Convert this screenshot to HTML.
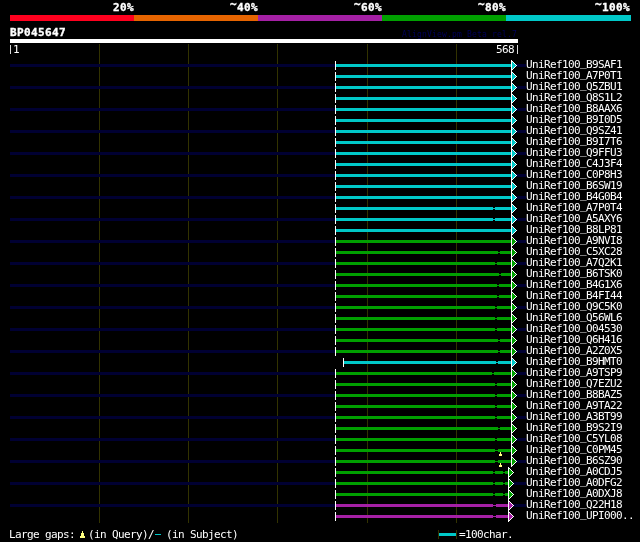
<!DOCTYPE html>
<html lang="en"><head><meta charset="utf-8"><title>AlignView BP045647</title>
<style>
html,body{margin:0;padding:0;background:#000;}
body{width:640px;height:542px;overflow:hidden;position:relative;}
.g{position:absolute;left:0;top:0;display:block;}
.t{position:absolute;white-space:pre;color:#fff;line-height:1;margin:0;padding:0;transform-origin:0 0;}

.u{position:relative;top:-2px;}

.w{position:relative;top:-3px;}

.t.p{font-size:9.3px;letter-spacing:0;-webkit-text-stroke:0.1px #fff;}
#tx{position:absolute;left:0;top:0;width:640px;height:542px;will-change:transform;}
.b{font-family:'DejaVu Sans Mono','Liberation Mono',monospace;font-weight:bold;font-size:11px;letter-spacing:0.38px;-webkit-text-stroke:0.35px #fff;}
.s{font-family:'DejaVu Sans Mono','Liberation Mono',monospace;font-size:11px;letter-spacing:-0.62px;}
.n{font-family:'DejaVu Sans Mono','Liberation Mono',monospace;font-size:8px;letter-spacing:0.18px;color:#00005a;}
</style></head>
<body>
<svg class="g" width="640" height="542" viewBox="0 0 640 542" shape-rendering="crispEdges">
<rect x="10" y="15" width="124" height="6" fill="#ff001e"/>
<rect x="134" y="15" width="124" height="6" fill="#e66400"/>
<rect x="258" y="15" width="124" height="6" fill="#a520a5"/>
<rect x="382" y="15" width="124" height="6" fill="#00a000"/>
<rect x="506" y="15" width="125" height="6" fill="#00c8c8"/>
<rect x="10" y="39" width="508" height="4" fill="#ffffff"/>
<rect x="99" y="44" width="1" height="479" fill="#323200"/>
<rect x="188" y="44" width="1" height="479" fill="#323200"/>
<rect x="277" y="44" width="1" height="479" fill="#323200"/>
<rect x="367" y="44" width="1" height="479" fill="#323200"/>
<rect x="456" y="44" width="1" height="479" fill="#323200"/>
<rect x="10" y="64" width="516" height="3" fill="#000032"/>
<rect x="336" y="64" width="175" height="3" fill="#000000"/>
<rect x="336" y="65" width="175" height="1" fill="#00c8c8"/>
<rect x="336" y="64" width="175" height="3" fill="#00c8c8"/>
<rect x="335" y="61" width="1" height="9" fill="#ffffff"/>
<rect x="511" y="60" width="1" height="11" fill="#ffffff"/>
<rect x="512" y="62" width="1" height="7" fill="#00c8c8"/>
<rect x="512" y="61" width="1" height="1" fill="#ffffff"/>
<rect x="512" y="69" width="1" height="1" fill="#ffffff"/>
<rect x="513" y="63" width="1" height="5" fill="#00c8c8"/>
<rect x="513" y="62" width="1" height="1" fill="#ffffff"/>
<rect x="513" y="68" width="1" height="1" fill="#ffffff"/>
<rect x="514" y="64" width="1" height="3" fill="#00c8c8"/>
<rect x="514" y="63" width="1" height="1" fill="#ffffff"/>
<rect x="514" y="67" width="1" height="1" fill="#ffffff"/>
<rect x="515" y="65" width="1" height="1" fill="#00c8c8"/>
<rect x="515" y="64" width="1" height="1" fill="#ffffff"/>
<rect x="515" y="66" width="1" height="1" fill="#ffffff"/>
<rect x="516" y="65" width="1" height="1" fill="#ffffff"/>
<rect x="336" y="75" width="175" height="3" fill="#000000"/>
<rect x="336" y="76" width="175" height="1" fill="#00c8c8"/>
<rect x="336" y="75" width="175" height="3" fill="#00c8c8"/>
<rect x="335" y="72" width="1" height="9" fill="#ffffff"/>
<rect x="511" y="71" width="1" height="11" fill="#ffffff"/>
<rect x="512" y="73" width="1" height="7" fill="#00c8c8"/>
<rect x="512" y="72" width="1" height="1" fill="#ffffff"/>
<rect x="512" y="80" width="1" height="1" fill="#ffffff"/>
<rect x="513" y="74" width="1" height="5" fill="#00c8c8"/>
<rect x="513" y="73" width="1" height="1" fill="#ffffff"/>
<rect x="513" y="79" width="1" height="1" fill="#ffffff"/>
<rect x="514" y="75" width="1" height="3" fill="#00c8c8"/>
<rect x="514" y="74" width="1" height="1" fill="#ffffff"/>
<rect x="514" y="78" width="1" height="1" fill="#ffffff"/>
<rect x="515" y="76" width="1" height="1" fill="#00c8c8"/>
<rect x="515" y="75" width="1" height="1" fill="#ffffff"/>
<rect x="515" y="77" width="1" height="1" fill="#ffffff"/>
<rect x="516" y="76" width="1" height="1" fill="#ffffff"/>
<rect x="10" y="86" width="516" height="3" fill="#000032"/>
<rect x="336" y="86" width="175" height="3" fill="#000000"/>
<rect x="336" y="87" width="175" height="1" fill="#00c8c8"/>
<rect x="336" y="86" width="175" height="3" fill="#00c8c8"/>
<rect x="335" y="83" width="1" height="9" fill="#ffffff"/>
<rect x="511" y="82" width="1" height="11" fill="#ffffff"/>
<rect x="512" y="84" width="1" height="7" fill="#00c8c8"/>
<rect x="512" y="83" width="1" height="1" fill="#ffffff"/>
<rect x="512" y="91" width="1" height="1" fill="#ffffff"/>
<rect x="513" y="85" width="1" height="5" fill="#00c8c8"/>
<rect x="513" y="84" width="1" height="1" fill="#ffffff"/>
<rect x="513" y="90" width="1" height="1" fill="#ffffff"/>
<rect x="514" y="86" width="1" height="3" fill="#00c8c8"/>
<rect x="514" y="85" width="1" height="1" fill="#ffffff"/>
<rect x="514" y="89" width="1" height="1" fill="#ffffff"/>
<rect x="515" y="87" width="1" height="1" fill="#00c8c8"/>
<rect x="515" y="86" width="1" height="1" fill="#ffffff"/>
<rect x="515" y="88" width="1" height="1" fill="#ffffff"/>
<rect x="516" y="87" width="1" height="1" fill="#ffffff"/>
<rect x="336" y="97" width="175" height="3" fill="#000000"/>
<rect x="336" y="98" width="175" height="1" fill="#00c8c8"/>
<rect x="336" y="97" width="175" height="3" fill="#00c8c8"/>
<rect x="335" y="94" width="1" height="9" fill="#ffffff"/>
<rect x="511" y="93" width="1" height="11" fill="#ffffff"/>
<rect x="512" y="95" width="1" height="7" fill="#00c8c8"/>
<rect x="512" y="94" width="1" height="1" fill="#ffffff"/>
<rect x="512" y="102" width="1" height="1" fill="#ffffff"/>
<rect x="513" y="96" width="1" height="5" fill="#00c8c8"/>
<rect x="513" y="95" width="1" height="1" fill="#ffffff"/>
<rect x="513" y="101" width="1" height="1" fill="#ffffff"/>
<rect x="514" y="97" width="1" height="3" fill="#00c8c8"/>
<rect x="514" y="96" width="1" height="1" fill="#ffffff"/>
<rect x="514" y="100" width="1" height="1" fill="#ffffff"/>
<rect x="515" y="98" width="1" height="1" fill="#00c8c8"/>
<rect x="515" y="97" width="1" height="1" fill="#ffffff"/>
<rect x="515" y="99" width="1" height="1" fill="#ffffff"/>
<rect x="516" y="98" width="1" height="1" fill="#ffffff"/>
<rect x="10" y="108" width="516" height="3" fill="#000032"/>
<rect x="336" y="108" width="175" height="3" fill="#000000"/>
<rect x="336" y="109" width="175" height="1" fill="#00c8c8"/>
<rect x="336" y="108" width="175" height="3" fill="#00c8c8"/>
<rect x="335" y="105" width="1" height="9" fill="#ffffff"/>
<rect x="511" y="104" width="1" height="11" fill="#ffffff"/>
<rect x="512" y="106" width="1" height="7" fill="#00c8c8"/>
<rect x="512" y="105" width="1" height="1" fill="#ffffff"/>
<rect x="512" y="113" width="1" height="1" fill="#ffffff"/>
<rect x="513" y="107" width="1" height="5" fill="#00c8c8"/>
<rect x="513" y="106" width="1" height="1" fill="#ffffff"/>
<rect x="513" y="112" width="1" height="1" fill="#ffffff"/>
<rect x="514" y="108" width="1" height="3" fill="#00c8c8"/>
<rect x="514" y="107" width="1" height="1" fill="#ffffff"/>
<rect x="514" y="111" width="1" height="1" fill="#ffffff"/>
<rect x="515" y="109" width="1" height="1" fill="#00c8c8"/>
<rect x="515" y="108" width="1" height="1" fill="#ffffff"/>
<rect x="515" y="110" width="1" height="1" fill="#ffffff"/>
<rect x="516" y="109" width="1" height="1" fill="#ffffff"/>
<rect x="336" y="119" width="175" height="3" fill="#000000"/>
<rect x="336" y="120" width="175" height="1" fill="#00c8c8"/>
<rect x="336" y="119" width="175" height="3" fill="#00c8c8"/>
<rect x="335" y="116" width="1" height="9" fill="#ffffff"/>
<rect x="511" y="115" width="1" height="11" fill="#ffffff"/>
<rect x="512" y="117" width="1" height="7" fill="#00c8c8"/>
<rect x="512" y="116" width="1" height="1" fill="#ffffff"/>
<rect x="512" y="124" width="1" height="1" fill="#ffffff"/>
<rect x="513" y="118" width="1" height="5" fill="#00c8c8"/>
<rect x="513" y="117" width="1" height="1" fill="#ffffff"/>
<rect x="513" y="123" width="1" height="1" fill="#ffffff"/>
<rect x="514" y="119" width="1" height="3" fill="#00c8c8"/>
<rect x="514" y="118" width="1" height="1" fill="#ffffff"/>
<rect x="514" y="122" width="1" height="1" fill="#ffffff"/>
<rect x="515" y="120" width="1" height="1" fill="#00c8c8"/>
<rect x="515" y="119" width="1" height="1" fill="#ffffff"/>
<rect x="515" y="121" width="1" height="1" fill="#ffffff"/>
<rect x="516" y="120" width="1" height="1" fill="#ffffff"/>
<rect x="10" y="130" width="516" height="3" fill="#000032"/>
<rect x="336" y="130" width="175" height="3" fill="#000000"/>
<rect x="336" y="131" width="175" height="1" fill="#00c8c8"/>
<rect x="336" y="130" width="175" height="3" fill="#00c8c8"/>
<rect x="335" y="127" width="1" height="9" fill="#ffffff"/>
<rect x="511" y="126" width="1" height="11" fill="#ffffff"/>
<rect x="512" y="128" width="1" height="7" fill="#00c8c8"/>
<rect x="512" y="127" width="1" height="1" fill="#ffffff"/>
<rect x="512" y="135" width="1" height="1" fill="#ffffff"/>
<rect x="513" y="129" width="1" height="5" fill="#00c8c8"/>
<rect x="513" y="128" width="1" height="1" fill="#ffffff"/>
<rect x="513" y="134" width="1" height="1" fill="#ffffff"/>
<rect x="514" y="130" width="1" height="3" fill="#00c8c8"/>
<rect x="514" y="129" width="1" height="1" fill="#ffffff"/>
<rect x="514" y="133" width="1" height="1" fill="#ffffff"/>
<rect x="515" y="131" width="1" height="1" fill="#00c8c8"/>
<rect x="515" y="130" width="1" height="1" fill="#ffffff"/>
<rect x="515" y="132" width="1" height="1" fill="#ffffff"/>
<rect x="516" y="131" width="1" height="1" fill="#ffffff"/>
<rect x="336" y="141" width="175" height="3" fill="#000000"/>
<rect x="336" y="142" width="175" height="1" fill="#00c8c8"/>
<rect x="336" y="141" width="175" height="3" fill="#00c8c8"/>
<rect x="335" y="138" width="1" height="9" fill="#ffffff"/>
<rect x="511" y="137" width="1" height="11" fill="#ffffff"/>
<rect x="512" y="139" width="1" height="7" fill="#00c8c8"/>
<rect x="512" y="138" width="1" height="1" fill="#ffffff"/>
<rect x="512" y="146" width="1" height="1" fill="#ffffff"/>
<rect x="513" y="140" width="1" height="5" fill="#00c8c8"/>
<rect x="513" y="139" width="1" height="1" fill="#ffffff"/>
<rect x="513" y="145" width="1" height="1" fill="#ffffff"/>
<rect x="514" y="141" width="1" height="3" fill="#00c8c8"/>
<rect x="514" y="140" width="1" height="1" fill="#ffffff"/>
<rect x="514" y="144" width="1" height="1" fill="#ffffff"/>
<rect x="515" y="142" width="1" height="1" fill="#00c8c8"/>
<rect x="515" y="141" width="1" height="1" fill="#ffffff"/>
<rect x="515" y="143" width="1" height="1" fill="#ffffff"/>
<rect x="516" y="142" width="1" height="1" fill="#ffffff"/>
<rect x="10" y="152" width="516" height="3" fill="#000032"/>
<rect x="336" y="152" width="175" height="3" fill="#000000"/>
<rect x="336" y="153" width="175" height="1" fill="#00c8c8"/>
<rect x="336" y="152" width="175" height="3" fill="#00c8c8"/>
<rect x="335" y="149" width="1" height="9" fill="#ffffff"/>
<rect x="511" y="148" width="1" height="11" fill="#ffffff"/>
<rect x="512" y="150" width="1" height="7" fill="#00c8c8"/>
<rect x="512" y="149" width="1" height="1" fill="#ffffff"/>
<rect x="512" y="157" width="1" height="1" fill="#ffffff"/>
<rect x="513" y="151" width="1" height="5" fill="#00c8c8"/>
<rect x="513" y="150" width="1" height="1" fill="#ffffff"/>
<rect x="513" y="156" width="1" height="1" fill="#ffffff"/>
<rect x="514" y="152" width="1" height="3" fill="#00c8c8"/>
<rect x="514" y="151" width="1" height="1" fill="#ffffff"/>
<rect x="514" y="155" width="1" height="1" fill="#ffffff"/>
<rect x="515" y="153" width="1" height="1" fill="#00c8c8"/>
<rect x="515" y="152" width="1" height="1" fill="#ffffff"/>
<rect x="515" y="154" width="1" height="1" fill="#ffffff"/>
<rect x="516" y="153" width="1" height="1" fill="#ffffff"/>
<rect x="336" y="163" width="175" height="3" fill="#000000"/>
<rect x="336" y="164" width="175" height="1" fill="#00c8c8"/>
<rect x="336" y="163" width="175" height="3" fill="#00c8c8"/>
<rect x="335" y="160" width="1" height="9" fill="#ffffff"/>
<rect x="511" y="159" width="1" height="11" fill="#ffffff"/>
<rect x="512" y="161" width="1" height="7" fill="#00c8c8"/>
<rect x="512" y="160" width="1" height="1" fill="#ffffff"/>
<rect x="512" y="168" width="1" height="1" fill="#ffffff"/>
<rect x="513" y="162" width="1" height="5" fill="#00c8c8"/>
<rect x="513" y="161" width="1" height="1" fill="#ffffff"/>
<rect x="513" y="167" width="1" height="1" fill="#ffffff"/>
<rect x="514" y="163" width="1" height="3" fill="#00c8c8"/>
<rect x="514" y="162" width="1" height="1" fill="#ffffff"/>
<rect x="514" y="166" width="1" height="1" fill="#ffffff"/>
<rect x="515" y="164" width="1" height="1" fill="#00c8c8"/>
<rect x="515" y="163" width="1" height="1" fill="#ffffff"/>
<rect x="515" y="165" width="1" height="1" fill="#ffffff"/>
<rect x="516" y="164" width="1" height="1" fill="#ffffff"/>
<rect x="10" y="174" width="516" height="3" fill="#000032"/>
<rect x="336" y="174" width="175" height="3" fill="#000000"/>
<rect x="336" y="175" width="175" height="1" fill="#00c8c8"/>
<rect x="336" y="174" width="175" height="3" fill="#00c8c8"/>
<rect x="335" y="171" width="1" height="9" fill="#ffffff"/>
<rect x="511" y="170" width="1" height="11" fill="#ffffff"/>
<rect x="512" y="172" width="1" height="7" fill="#00c8c8"/>
<rect x="512" y="171" width="1" height="1" fill="#ffffff"/>
<rect x="512" y="179" width="1" height="1" fill="#ffffff"/>
<rect x="513" y="173" width="1" height="5" fill="#00c8c8"/>
<rect x="513" y="172" width="1" height="1" fill="#ffffff"/>
<rect x="513" y="178" width="1" height="1" fill="#ffffff"/>
<rect x="514" y="174" width="1" height="3" fill="#00c8c8"/>
<rect x="514" y="173" width="1" height="1" fill="#ffffff"/>
<rect x="514" y="177" width="1" height="1" fill="#ffffff"/>
<rect x="515" y="175" width="1" height="1" fill="#00c8c8"/>
<rect x="515" y="174" width="1" height="1" fill="#ffffff"/>
<rect x="515" y="176" width="1" height="1" fill="#ffffff"/>
<rect x="516" y="175" width="1" height="1" fill="#ffffff"/>
<rect x="336" y="185" width="175" height="3" fill="#000000"/>
<rect x="336" y="186" width="175" height="1" fill="#00c8c8"/>
<rect x="336" y="185" width="175" height="3" fill="#00c8c8"/>
<rect x="335" y="182" width="1" height="9" fill="#ffffff"/>
<rect x="511" y="181" width="1" height="11" fill="#ffffff"/>
<rect x="512" y="183" width="1" height="7" fill="#00c8c8"/>
<rect x="512" y="182" width="1" height="1" fill="#ffffff"/>
<rect x="512" y="190" width="1" height="1" fill="#ffffff"/>
<rect x="513" y="184" width="1" height="5" fill="#00c8c8"/>
<rect x="513" y="183" width="1" height="1" fill="#ffffff"/>
<rect x="513" y="189" width="1" height="1" fill="#ffffff"/>
<rect x="514" y="185" width="1" height="3" fill="#00c8c8"/>
<rect x="514" y="184" width="1" height="1" fill="#ffffff"/>
<rect x="514" y="188" width="1" height="1" fill="#ffffff"/>
<rect x="515" y="186" width="1" height="1" fill="#00c8c8"/>
<rect x="515" y="185" width="1" height="1" fill="#ffffff"/>
<rect x="515" y="187" width="1" height="1" fill="#ffffff"/>
<rect x="516" y="186" width="1" height="1" fill="#ffffff"/>
<rect x="10" y="196" width="516" height="3" fill="#000032"/>
<rect x="336" y="196" width="175" height="3" fill="#000000"/>
<rect x="336" y="197" width="175" height="1" fill="#00c8c8"/>
<rect x="336" y="196" width="175" height="3" fill="#00c8c8"/>
<rect x="335" y="193" width="1" height="9" fill="#ffffff"/>
<rect x="511" y="192" width="1" height="11" fill="#ffffff"/>
<rect x="512" y="194" width="1" height="7" fill="#00c8c8"/>
<rect x="512" y="193" width="1" height="1" fill="#ffffff"/>
<rect x="512" y="201" width="1" height="1" fill="#ffffff"/>
<rect x="513" y="195" width="1" height="5" fill="#00c8c8"/>
<rect x="513" y="194" width="1" height="1" fill="#ffffff"/>
<rect x="513" y="200" width="1" height="1" fill="#ffffff"/>
<rect x="514" y="196" width="1" height="3" fill="#00c8c8"/>
<rect x="514" y="195" width="1" height="1" fill="#ffffff"/>
<rect x="514" y="199" width="1" height="1" fill="#ffffff"/>
<rect x="515" y="197" width="1" height="1" fill="#00c8c8"/>
<rect x="515" y="196" width="1" height="1" fill="#ffffff"/>
<rect x="515" y="198" width="1" height="1" fill="#ffffff"/>
<rect x="516" y="197" width="1" height="1" fill="#ffffff"/>
<rect x="336" y="207" width="175" height="3" fill="#000000"/>
<rect x="336" y="208" width="175" height="1" fill="#00c8c8"/>
<rect x="336" y="207" width="157" height="3" fill="#00c8c8"/>
<rect x="495" y="207" width="16" height="3" fill="#00c8c8"/>
<rect x="335" y="204" width="1" height="9" fill="#ffffff"/>
<rect x="511" y="203" width="1" height="11" fill="#ffffff"/>
<rect x="512" y="205" width="1" height="7" fill="#00c8c8"/>
<rect x="512" y="204" width="1" height="1" fill="#ffffff"/>
<rect x="512" y="212" width="1" height="1" fill="#ffffff"/>
<rect x="513" y="206" width="1" height="5" fill="#00c8c8"/>
<rect x="513" y="205" width="1" height="1" fill="#ffffff"/>
<rect x="513" y="211" width="1" height="1" fill="#ffffff"/>
<rect x="514" y="207" width="1" height="3" fill="#00c8c8"/>
<rect x="514" y="206" width="1" height="1" fill="#ffffff"/>
<rect x="514" y="210" width="1" height="1" fill="#ffffff"/>
<rect x="515" y="208" width="1" height="1" fill="#00c8c8"/>
<rect x="515" y="207" width="1" height="1" fill="#ffffff"/>
<rect x="515" y="209" width="1" height="1" fill="#ffffff"/>
<rect x="516" y="208" width="1" height="1" fill="#ffffff"/>
<rect x="10" y="218" width="516" height="3" fill="#000032"/>
<rect x="336" y="218" width="175" height="3" fill="#000000"/>
<rect x="336" y="219" width="175" height="1" fill="#00c8c8"/>
<rect x="336" y="218" width="157" height="3" fill="#00c8c8"/>
<rect x="495" y="218" width="16" height="3" fill="#00c8c8"/>
<rect x="335" y="215" width="1" height="9" fill="#ffffff"/>
<rect x="511" y="214" width="1" height="11" fill="#ffffff"/>
<rect x="512" y="216" width="1" height="7" fill="#00c8c8"/>
<rect x="512" y="215" width="1" height="1" fill="#ffffff"/>
<rect x="512" y="223" width="1" height="1" fill="#ffffff"/>
<rect x="513" y="217" width="1" height="5" fill="#00c8c8"/>
<rect x="513" y="216" width="1" height="1" fill="#ffffff"/>
<rect x="513" y="222" width="1" height="1" fill="#ffffff"/>
<rect x="514" y="218" width="1" height="3" fill="#00c8c8"/>
<rect x="514" y="217" width="1" height="1" fill="#ffffff"/>
<rect x="514" y="221" width="1" height="1" fill="#ffffff"/>
<rect x="515" y="219" width="1" height="1" fill="#00c8c8"/>
<rect x="515" y="218" width="1" height="1" fill="#ffffff"/>
<rect x="515" y="220" width="1" height="1" fill="#ffffff"/>
<rect x="516" y="219" width="1" height="1" fill="#ffffff"/>
<rect x="336" y="229" width="175" height="3" fill="#000000"/>
<rect x="336" y="230" width="175" height="1" fill="#00c8c8"/>
<rect x="336" y="229" width="175" height="3" fill="#00c8c8"/>
<rect x="335" y="226" width="1" height="9" fill="#ffffff"/>
<rect x="511" y="225" width="1" height="11" fill="#ffffff"/>
<rect x="512" y="227" width="1" height="7" fill="#00c8c8"/>
<rect x="512" y="226" width="1" height="1" fill="#ffffff"/>
<rect x="512" y="234" width="1" height="1" fill="#ffffff"/>
<rect x="513" y="228" width="1" height="5" fill="#00c8c8"/>
<rect x="513" y="227" width="1" height="1" fill="#ffffff"/>
<rect x="513" y="233" width="1" height="1" fill="#ffffff"/>
<rect x="514" y="229" width="1" height="3" fill="#00c8c8"/>
<rect x="514" y="228" width="1" height="1" fill="#ffffff"/>
<rect x="514" y="232" width="1" height="1" fill="#ffffff"/>
<rect x="515" y="230" width="1" height="1" fill="#00c8c8"/>
<rect x="515" y="229" width="1" height="1" fill="#ffffff"/>
<rect x="515" y="231" width="1" height="1" fill="#ffffff"/>
<rect x="516" y="230" width="1" height="1" fill="#ffffff"/>
<rect x="10" y="240" width="516" height="3" fill="#000032"/>
<rect x="336" y="240" width="175" height="3" fill="#000000"/>
<rect x="336" y="241" width="175" height="1" fill="#00a000"/>
<rect x="336" y="240" width="175" height="3" fill="#00a000"/>
<rect x="335" y="237" width="1" height="9" fill="#ffffff"/>
<rect x="511" y="236" width="1" height="11" fill="#ffffff"/>
<rect x="512" y="238" width="1" height="7" fill="#00a000"/>
<rect x="512" y="237" width="1" height="1" fill="#ffffff"/>
<rect x="512" y="245" width="1" height="1" fill="#ffffff"/>
<rect x="513" y="239" width="1" height="5" fill="#00a000"/>
<rect x="513" y="238" width="1" height="1" fill="#ffffff"/>
<rect x="513" y="244" width="1" height="1" fill="#ffffff"/>
<rect x="514" y="240" width="1" height="3" fill="#00a000"/>
<rect x="514" y="239" width="1" height="1" fill="#ffffff"/>
<rect x="514" y="243" width="1" height="1" fill="#ffffff"/>
<rect x="515" y="241" width="1" height="1" fill="#00a000"/>
<rect x="515" y="240" width="1" height="1" fill="#ffffff"/>
<rect x="515" y="242" width="1" height="1" fill="#ffffff"/>
<rect x="516" y="241" width="1" height="1" fill="#ffffff"/>
<rect x="336" y="251" width="175" height="3" fill="#000000"/>
<rect x="336" y="252" width="175" height="1" fill="#00a000"/>
<rect x="336" y="251" width="162" height="3" fill="#00a000"/>
<rect x="500" y="251" width="11" height="3" fill="#00a000"/>
<rect x="335" y="248" width="1" height="9" fill="#ffffff"/>
<rect x="511" y="247" width="1" height="11" fill="#ffffff"/>
<rect x="512" y="249" width="1" height="7" fill="#00a000"/>
<rect x="512" y="248" width="1" height="1" fill="#ffffff"/>
<rect x="512" y="256" width="1" height="1" fill="#ffffff"/>
<rect x="513" y="250" width="1" height="5" fill="#00a000"/>
<rect x="513" y="249" width="1" height="1" fill="#ffffff"/>
<rect x="513" y="255" width="1" height="1" fill="#ffffff"/>
<rect x="514" y="251" width="1" height="3" fill="#00a000"/>
<rect x="514" y="250" width="1" height="1" fill="#ffffff"/>
<rect x="514" y="254" width="1" height="1" fill="#ffffff"/>
<rect x="515" y="252" width="1" height="1" fill="#00a000"/>
<rect x="515" y="251" width="1" height="1" fill="#ffffff"/>
<rect x="515" y="253" width="1" height="1" fill="#ffffff"/>
<rect x="516" y="252" width="1" height="1" fill="#ffffff"/>
<rect x="10" y="262" width="516" height="3" fill="#000032"/>
<rect x="336" y="262" width="175" height="3" fill="#000000"/>
<rect x="336" y="263" width="175" height="1" fill="#00a000"/>
<rect x="336" y="262" width="159" height="3" fill="#00a000"/>
<rect x="497" y="262" width="14" height="3" fill="#00a000"/>
<rect x="335" y="259" width="1" height="9" fill="#ffffff"/>
<rect x="511" y="258" width="1" height="11" fill="#ffffff"/>
<rect x="512" y="260" width="1" height="7" fill="#00a000"/>
<rect x="512" y="259" width="1" height="1" fill="#ffffff"/>
<rect x="512" y="267" width="1" height="1" fill="#ffffff"/>
<rect x="513" y="261" width="1" height="5" fill="#00a000"/>
<rect x="513" y="260" width="1" height="1" fill="#ffffff"/>
<rect x="513" y="266" width="1" height="1" fill="#ffffff"/>
<rect x="514" y="262" width="1" height="3" fill="#00a000"/>
<rect x="514" y="261" width="1" height="1" fill="#ffffff"/>
<rect x="514" y="265" width="1" height="1" fill="#ffffff"/>
<rect x="515" y="263" width="1" height="1" fill="#00a000"/>
<rect x="515" y="262" width="1" height="1" fill="#ffffff"/>
<rect x="515" y="264" width="1" height="1" fill="#ffffff"/>
<rect x="516" y="263" width="1" height="1" fill="#ffffff"/>
<rect x="336" y="273" width="175" height="3" fill="#000000"/>
<rect x="336" y="274" width="175" height="1" fill="#00a000"/>
<rect x="336" y="273" width="163" height="3" fill="#00a000"/>
<rect x="501" y="273" width="10" height="3" fill="#00a000"/>
<rect x="335" y="270" width="1" height="9" fill="#ffffff"/>
<rect x="511" y="269" width="1" height="11" fill="#ffffff"/>
<rect x="512" y="271" width="1" height="7" fill="#00a000"/>
<rect x="512" y="270" width="1" height="1" fill="#ffffff"/>
<rect x="512" y="278" width="1" height="1" fill="#ffffff"/>
<rect x="513" y="272" width="1" height="5" fill="#00a000"/>
<rect x="513" y="271" width="1" height="1" fill="#ffffff"/>
<rect x="513" y="277" width="1" height="1" fill="#ffffff"/>
<rect x="514" y="273" width="1" height="3" fill="#00a000"/>
<rect x="514" y="272" width="1" height="1" fill="#ffffff"/>
<rect x="514" y="276" width="1" height="1" fill="#ffffff"/>
<rect x="515" y="274" width="1" height="1" fill="#00a000"/>
<rect x="515" y="273" width="1" height="1" fill="#ffffff"/>
<rect x="515" y="275" width="1" height="1" fill="#ffffff"/>
<rect x="516" y="274" width="1" height="1" fill="#ffffff"/>
<rect x="10" y="284" width="516" height="3" fill="#000032"/>
<rect x="336" y="284" width="175" height="3" fill="#000000"/>
<rect x="336" y="285" width="175" height="1" fill="#00a000"/>
<rect x="336" y="284" width="161" height="3" fill="#00a000"/>
<rect x="499" y="284" width="12" height="3" fill="#00a000"/>
<rect x="335" y="281" width="1" height="9" fill="#ffffff"/>
<rect x="511" y="280" width="1" height="11" fill="#ffffff"/>
<rect x="512" y="282" width="1" height="7" fill="#00a000"/>
<rect x="512" y="281" width="1" height="1" fill="#ffffff"/>
<rect x="512" y="289" width="1" height="1" fill="#ffffff"/>
<rect x="513" y="283" width="1" height="5" fill="#00a000"/>
<rect x="513" y="282" width="1" height="1" fill="#ffffff"/>
<rect x="513" y="288" width="1" height="1" fill="#ffffff"/>
<rect x="514" y="284" width="1" height="3" fill="#00a000"/>
<rect x="514" y="283" width="1" height="1" fill="#ffffff"/>
<rect x="514" y="287" width="1" height="1" fill="#ffffff"/>
<rect x="515" y="285" width="1" height="1" fill="#00a000"/>
<rect x="515" y="284" width="1" height="1" fill="#ffffff"/>
<rect x="515" y="286" width="1" height="1" fill="#ffffff"/>
<rect x="516" y="285" width="1" height="1" fill="#ffffff"/>
<rect x="336" y="295" width="175" height="3" fill="#000000"/>
<rect x="336" y="296" width="175" height="1" fill="#00a000"/>
<rect x="336" y="295" width="161" height="3" fill="#00a000"/>
<rect x="499" y="295" width="12" height="3" fill="#00a000"/>
<rect x="335" y="292" width="1" height="9" fill="#ffffff"/>
<rect x="511" y="291" width="1" height="11" fill="#ffffff"/>
<rect x="512" y="293" width="1" height="7" fill="#00a000"/>
<rect x="512" y="292" width="1" height="1" fill="#ffffff"/>
<rect x="512" y="300" width="1" height="1" fill="#ffffff"/>
<rect x="513" y="294" width="1" height="5" fill="#00a000"/>
<rect x="513" y="293" width="1" height="1" fill="#ffffff"/>
<rect x="513" y="299" width="1" height="1" fill="#ffffff"/>
<rect x="514" y="295" width="1" height="3" fill="#00a000"/>
<rect x="514" y="294" width="1" height="1" fill="#ffffff"/>
<rect x="514" y="298" width="1" height="1" fill="#ffffff"/>
<rect x="515" y="296" width="1" height="1" fill="#00a000"/>
<rect x="515" y="295" width="1" height="1" fill="#ffffff"/>
<rect x="515" y="297" width="1" height="1" fill="#ffffff"/>
<rect x="516" y="296" width="1" height="1" fill="#ffffff"/>
<rect x="10" y="306" width="516" height="3" fill="#000032"/>
<rect x="336" y="306" width="175" height="3" fill="#000000"/>
<rect x="336" y="307" width="175" height="1" fill="#00a000"/>
<rect x="336" y="306" width="159" height="3" fill="#00a000"/>
<rect x="497" y="306" width="14" height="3" fill="#00a000"/>
<rect x="335" y="303" width="1" height="9" fill="#ffffff"/>
<rect x="511" y="302" width="1" height="11" fill="#ffffff"/>
<rect x="512" y="304" width="1" height="7" fill="#00a000"/>
<rect x="512" y="303" width="1" height="1" fill="#ffffff"/>
<rect x="512" y="311" width="1" height="1" fill="#ffffff"/>
<rect x="513" y="305" width="1" height="5" fill="#00a000"/>
<rect x="513" y="304" width="1" height="1" fill="#ffffff"/>
<rect x="513" y="310" width="1" height="1" fill="#ffffff"/>
<rect x="514" y="306" width="1" height="3" fill="#00a000"/>
<rect x="514" y="305" width="1" height="1" fill="#ffffff"/>
<rect x="514" y="309" width="1" height="1" fill="#ffffff"/>
<rect x="515" y="307" width="1" height="1" fill="#00a000"/>
<rect x="515" y="306" width="1" height="1" fill="#ffffff"/>
<rect x="515" y="308" width="1" height="1" fill="#ffffff"/>
<rect x="516" y="307" width="1" height="1" fill="#ffffff"/>
<rect x="336" y="317" width="175" height="3" fill="#000000"/>
<rect x="336" y="318" width="175" height="1" fill="#00a000"/>
<rect x="336" y="317" width="159" height="3" fill="#00a000"/>
<rect x="497" y="317" width="14" height="3" fill="#00a000"/>
<rect x="335" y="314" width="1" height="9" fill="#ffffff"/>
<rect x="511" y="313" width="1" height="11" fill="#ffffff"/>
<rect x="512" y="315" width="1" height="7" fill="#00a000"/>
<rect x="512" y="314" width="1" height="1" fill="#ffffff"/>
<rect x="512" y="322" width="1" height="1" fill="#ffffff"/>
<rect x="513" y="316" width="1" height="5" fill="#00a000"/>
<rect x="513" y="315" width="1" height="1" fill="#ffffff"/>
<rect x="513" y="321" width="1" height="1" fill="#ffffff"/>
<rect x="514" y="317" width="1" height="3" fill="#00a000"/>
<rect x="514" y="316" width="1" height="1" fill="#ffffff"/>
<rect x="514" y="320" width="1" height="1" fill="#ffffff"/>
<rect x="515" y="318" width="1" height="1" fill="#00a000"/>
<rect x="515" y="317" width="1" height="1" fill="#ffffff"/>
<rect x="515" y="319" width="1" height="1" fill="#ffffff"/>
<rect x="516" y="318" width="1" height="1" fill="#ffffff"/>
<rect x="10" y="328" width="516" height="3" fill="#000032"/>
<rect x="336" y="328" width="175" height="3" fill="#000000"/>
<rect x="336" y="329" width="175" height="1" fill="#00a000"/>
<rect x="336" y="328" width="159" height="3" fill="#00a000"/>
<rect x="497" y="328" width="14" height="3" fill="#00a000"/>
<rect x="335" y="325" width="1" height="9" fill="#ffffff"/>
<rect x="511" y="324" width="1" height="11" fill="#ffffff"/>
<rect x="512" y="326" width="1" height="7" fill="#00a000"/>
<rect x="512" y="325" width="1" height="1" fill="#ffffff"/>
<rect x="512" y="333" width="1" height="1" fill="#ffffff"/>
<rect x="513" y="327" width="1" height="5" fill="#00a000"/>
<rect x="513" y="326" width="1" height="1" fill="#ffffff"/>
<rect x="513" y="332" width="1" height="1" fill="#ffffff"/>
<rect x="514" y="328" width="1" height="3" fill="#00a000"/>
<rect x="514" y="327" width="1" height="1" fill="#ffffff"/>
<rect x="514" y="331" width="1" height="1" fill="#ffffff"/>
<rect x="515" y="329" width="1" height="1" fill="#00a000"/>
<rect x="515" y="328" width="1" height="1" fill="#ffffff"/>
<rect x="515" y="330" width="1" height="1" fill="#ffffff"/>
<rect x="516" y="329" width="1" height="1" fill="#ffffff"/>
<rect x="336" y="339" width="175" height="3" fill="#000000"/>
<rect x="336" y="340" width="175" height="1" fill="#00a000"/>
<rect x="336" y="339" width="162" height="3" fill="#00a000"/>
<rect x="500" y="339" width="11" height="3" fill="#00a000"/>
<rect x="335" y="336" width="1" height="9" fill="#ffffff"/>
<rect x="511" y="335" width="1" height="11" fill="#ffffff"/>
<rect x="512" y="337" width="1" height="7" fill="#00a000"/>
<rect x="512" y="336" width="1" height="1" fill="#ffffff"/>
<rect x="512" y="344" width="1" height="1" fill="#ffffff"/>
<rect x="513" y="338" width="1" height="5" fill="#00a000"/>
<rect x="513" y="337" width="1" height="1" fill="#ffffff"/>
<rect x="513" y="343" width="1" height="1" fill="#ffffff"/>
<rect x="514" y="339" width="1" height="3" fill="#00a000"/>
<rect x="514" y="338" width="1" height="1" fill="#ffffff"/>
<rect x="514" y="342" width="1" height="1" fill="#ffffff"/>
<rect x="515" y="340" width="1" height="1" fill="#00a000"/>
<rect x="515" y="339" width="1" height="1" fill="#ffffff"/>
<rect x="515" y="341" width="1" height="1" fill="#ffffff"/>
<rect x="516" y="340" width="1" height="1" fill="#ffffff"/>
<rect x="10" y="350" width="516" height="3" fill="#000032"/>
<rect x="336" y="350" width="175" height="3" fill="#000000"/>
<rect x="336" y="351" width="175" height="1" fill="#00a000"/>
<rect x="336" y="350" width="162" height="3" fill="#00a000"/>
<rect x="500" y="350" width="11" height="3" fill="#00a000"/>
<rect x="335" y="347" width="1" height="9" fill="#ffffff"/>
<rect x="511" y="346" width="1" height="11" fill="#ffffff"/>
<rect x="512" y="348" width="1" height="7" fill="#00a000"/>
<rect x="512" y="347" width="1" height="1" fill="#ffffff"/>
<rect x="512" y="355" width="1" height="1" fill="#ffffff"/>
<rect x="513" y="349" width="1" height="5" fill="#00a000"/>
<rect x="513" y="348" width="1" height="1" fill="#ffffff"/>
<rect x="513" y="354" width="1" height="1" fill="#ffffff"/>
<rect x="514" y="350" width="1" height="3" fill="#00a000"/>
<rect x="514" y="349" width="1" height="1" fill="#ffffff"/>
<rect x="514" y="353" width="1" height="1" fill="#ffffff"/>
<rect x="515" y="351" width="1" height="1" fill="#00a000"/>
<rect x="515" y="350" width="1" height="1" fill="#ffffff"/>
<rect x="515" y="352" width="1" height="1" fill="#ffffff"/>
<rect x="516" y="351" width="1" height="1" fill="#ffffff"/>
<rect x="344" y="361" width="167" height="3" fill="#000000"/>
<rect x="344" y="362" width="167" height="1" fill="#00c8c8"/>
<rect x="344" y="361" width="152" height="3" fill="#00c8c8"/>
<rect x="498" y="361" width="13" height="3" fill="#00c8c8"/>
<rect x="343" y="358" width="1" height="9" fill="#ffffff"/>
<rect x="511" y="357" width="1" height="11" fill="#ffffff"/>
<rect x="512" y="359" width="1" height="7" fill="#00c8c8"/>
<rect x="512" y="358" width="1" height="1" fill="#ffffff"/>
<rect x="512" y="366" width="1" height="1" fill="#ffffff"/>
<rect x="513" y="360" width="1" height="5" fill="#00c8c8"/>
<rect x="513" y="359" width="1" height="1" fill="#ffffff"/>
<rect x="513" y="365" width="1" height="1" fill="#ffffff"/>
<rect x="514" y="361" width="1" height="3" fill="#00c8c8"/>
<rect x="514" y="360" width="1" height="1" fill="#ffffff"/>
<rect x="514" y="364" width="1" height="1" fill="#ffffff"/>
<rect x="515" y="362" width="1" height="1" fill="#00c8c8"/>
<rect x="515" y="361" width="1" height="1" fill="#ffffff"/>
<rect x="515" y="363" width="1" height="1" fill="#ffffff"/>
<rect x="516" y="362" width="1" height="1" fill="#ffffff"/>
<rect x="10" y="372" width="516" height="3" fill="#000032"/>
<rect x="336" y="372" width="175" height="3" fill="#000000"/>
<rect x="336" y="373" width="175" height="1" fill="#00a000"/>
<rect x="336" y="372" width="156" height="3" fill="#00a000"/>
<rect x="494" y="372" width="17" height="3" fill="#00a000"/>
<rect x="335" y="369" width="1" height="9" fill="#ffffff"/>
<rect x="511" y="368" width="1" height="11" fill="#ffffff"/>
<rect x="512" y="370" width="1" height="7" fill="#00a000"/>
<rect x="512" y="369" width="1" height="1" fill="#ffffff"/>
<rect x="512" y="377" width="1" height="1" fill="#ffffff"/>
<rect x="513" y="371" width="1" height="5" fill="#00a000"/>
<rect x="513" y="370" width="1" height="1" fill="#ffffff"/>
<rect x="513" y="376" width="1" height="1" fill="#ffffff"/>
<rect x="514" y="372" width="1" height="3" fill="#00a000"/>
<rect x="514" y="371" width="1" height="1" fill="#ffffff"/>
<rect x="514" y="375" width="1" height="1" fill="#ffffff"/>
<rect x="515" y="373" width="1" height="1" fill="#00a000"/>
<rect x="515" y="372" width="1" height="1" fill="#ffffff"/>
<rect x="515" y="374" width="1" height="1" fill="#ffffff"/>
<rect x="516" y="373" width="1" height="1" fill="#ffffff"/>
<rect x="336" y="383" width="175" height="3" fill="#000000"/>
<rect x="336" y="384" width="175" height="1" fill="#00a000"/>
<rect x="336" y="383" width="159" height="3" fill="#00a000"/>
<rect x="497" y="383" width="14" height="3" fill="#00a000"/>
<rect x="335" y="380" width="1" height="9" fill="#ffffff"/>
<rect x="511" y="379" width="1" height="11" fill="#ffffff"/>
<rect x="512" y="381" width="1" height="7" fill="#00a000"/>
<rect x="512" y="380" width="1" height="1" fill="#ffffff"/>
<rect x="512" y="388" width="1" height="1" fill="#ffffff"/>
<rect x="513" y="382" width="1" height="5" fill="#00a000"/>
<rect x="513" y="381" width="1" height="1" fill="#ffffff"/>
<rect x="513" y="387" width="1" height="1" fill="#ffffff"/>
<rect x="514" y="383" width="1" height="3" fill="#00a000"/>
<rect x="514" y="382" width="1" height="1" fill="#ffffff"/>
<rect x="514" y="386" width="1" height="1" fill="#ffffff"/>
<rect x="515" y="384" width="1" height="1" fill="#00a000"/>
<rect x="515" y="383" width="1" height="1" fill="#ffffff"/>
<rect x="515" y="385" width="1" height="1" fill="#ffffff"/>
<rect x="516" y="384" width="1" height="1" fill="#ffffff"/>
<rect x="10" y="394" width="516" height="3" fill="#000032"/>
<rect x="336" y="394" width="175" height="3" fill="#000000"/>
<rect x="336" y="395" width="175" height="1" fill="#00a000"/>
<rect x="336" y="394" width="159" height="3" fill="#00a000"/>
<rect x="497" y="394" width="14" height="3" fill="#00a000"/>
<rect x="335" y="391" width="1" height="9" fill="#ffffff"/>
<rect x="511" y="390" width="1" height="11" fill="#ffffff"/>
<rect x="512" y="392" width="1" height="7" fill="#00a000"/>
<rect x="512" y="391" width="1" height="1" fill="#ffffff"/>
<rect x="512" y="399" width="1" height="1" fill="#ffffff"/>
<rect x="513" y="393" width="1" height="5" fill="#00a000"/>
<rect x="513" y="392" width="1" height="1" fill="#ffffff"/>
<rect x="513" y="398" width="1" height="1" fill="#ffffff"/>
<rect x="514" y="394" width="1" height="3" fill="#00a000"/>
<rect x="514" y="393" width="1" height="1" fill="#ffffff"/>
<rect x="514" y="397" width="1" height="1" fill="#ffffff"/>
<rect x="515" y="395" width="1" height="1" fill="#00a000"/>
<rect x="515" y="394" width="1" height="1" fill="#ffffff"/>
<rect x="515" y="396" width="1" height="1" fill="#ffffff"/>
<rect x="516" y="395" width="1" height="1" fill="#ffffff"/>
<rect x="336" y="405" width="175" height="3" fill="#000000"/>
<rect x="336" y="406" width="175" height="1" fill="#00a000"/>
<rect x="336" y="405" width="159" height="3" fill="#00a000"/>
<rect x="497" y="405" width="14" height="3" fill="#00a000"/>
<rect x="335" y="402" width="1" height="9" fill="#ffffff"/>
<rect x="511" y="401" width="1" height="11" fill="#ffffff"/>
<rect x="512" y="403" width="1" height="7" fill="#00a000"/>
<rect x="512" y="402" width="1" height="1" fill="#ffffff"/>
<rect x="512" y="410" width="1" height="1" fill="#ffffff"/>
<rect x="513" y="404" width="1" height="5" fill="#00a000"/>
<rect x="513" y="403" width="1" height="1" fill="#ffffff"/>
<rect x="513" y="409" width="1" height="1" fill="#ffffff"/>
<rect x="514" y="405" width="1" height="3" fill="#00a000"/>
<rect x="514" y="404" width="1" height="1" fill="#ffffff"/>
<rect x="514" y="408" width="1" height="1" fill="#ffffff"/>
<rect x="515" y="406" width="1" height="1" fill="#00a000"/>
<rect x="515" y="405" width="1" height="1" fill="#ffffff"/>
<rect x="515" y="407" width="1" height="1" fill="#ffffff"/>
<rect x="516" y="406" width="1" height="1" fill="#ffffff"/>
<rect x="10" y="416" width="516" height="3" fill="#000032"/>
<rect x="336" y="416" width="175" height="3" fill="#000000"/>
<rect x="336" y="417" width="175" height="1" fill="#00a000"/>
<rect x="336" y="416" width="159" height="3" fill="#00a000"/>
<rect x="497" y="416" width="14" height="3" fill="#00a000"/>
<rect x="335" y="413" width="1" height="9" fill="#ffffff"/>
<rect x="511" y="412" width="1" height="11" fill="#ffffff"/>
<rect x="512" y="414" width="1" height="7" fill="#00a000"/>
<rect x="512" y="413" width="1" height="1" fill="#ffffff"/>
<rect x="512" y="421" width="1" height="1" fill="#ffffff"/>
<rect x="513" y="415" width="1" height="5" fill="#00a000"/>
<rect x="513" y="414" width="1" height="1" fill="#ffffff"/>
<rect x="513" y="420" width="1" height="1" fill="#ffffff"/>
<rect x="514" y="416" width="1" height="3" fill="#00a000"/>
<rect x="514" y="415" width="1" height="1" fill="#ffffff"/>
<rect x="514" y="419" width="1" height="1" fill="#ffffff"/>
<rect x="515" y="417" width="1" height="1" fill="#00a000"/>
<rect x="515" y="416" width="1" height="1" fill="#ffffff"/>
<rect x="515" y="418" width="1" height="1" fill="#ffffff"/>
<rect x="516" y="417" width="1" height="1" fill="#ffffff"/>
<rect x="336" y="427" width="175" height="3" fill="#000000"/>
<rect x="336" y="428" width="175" height="1" fill="#00a000"/>
<rect x="336" y="427" width="162" height="3" fill="#00a000"/>
<rect x="500" y="427" width="11" height="3" fill="#00a000"/>
<rect x="335" y="424" width="1" height="9" fill="#ffffff"/>
<rect x="511" y="423" width="1" height="11" fill="#ffffff"/>
<rect x="512" y="425" width="1" height="7" fill="#00a000"/>
<rect x="512" y="424" width="1" height="1" fill="#ffffff"/>
<rect x="512" y="432" width="1" height="1" fill="#ffffff"/>
<rect x="513" y="426" width="1" height="5" fill="#00a000"/>
<rect x="513" y="425" width="1" height="1" fill="#ffffff"/>
<rect x="513" y="431" width="1" height="1" fill="#ffffff"/>
<rect x="514" y="427" width="1" height="3" fill="#00a000"/>
<rect x="514" y="426" width="1" height="1" fill="#ffffff"/>
<rect x="514" y="430" width="1" height="1" fill="#ffffff"/>
<rect x="515" y="428" width="1" height="1" fill="#00a000"/>
<rect x="515" y="427" width="1" height="1" fill="#ffffff"/>
<rect x="515" y="429" width="1" height="1" fill="#ffffff"/>
<rect x="516" y="428" width="1" height="1" fill="#ffffff"/>
<rect x="10" y="438" width="516" height="3" fill="#000032"/>
<rect x="336" y="438" width="175" height="3" fill="#000000"/>
<rect x="336" y="439" width="175" height="1" fill="#00a000"/>
<rect x="336" y="438" width="159" height="3" fill="#00a000"/>
<rect x="497" y="438" width="14" height="3" fill="#00a000"/>
<rect x="335" y="435" width="1" height="9" fill="#ffffff"/>
<rect x="511" y="434" width="1" height="11" fill="#ffffff"/>
<rect x="512" y="436" width="1" height="7" fill="#00a000"/>
<rect x="512" y="435" width="1" height="1" fill="#ffffff"/>
<rect x="512" y="443" width="1" height="1" fill="#ffffff"/>
<rect x="513" y="437" width="1" height="5" fill="#00a000"/>
<rect x="513" y="436" width="1" height="1" fill="#ffffff"/>
<rect x="513" y="442" width="1" height="1" fill="#ffffff"/>
<rect x="514" y="438" width="1" height="3" fill="#00a000"/>
<rect x="514" y="437" width="1" height="1" fill="#ffffff"/>
<rect x="514" y="441" width="1" height="1" fill="#ffffff"/>
<rect x="515" y="439" width="1" height="1" fill="#00a000"/>
<rect x="515" y="438" width="1" height="1" fill="#ffffff"/>
<rect x="515" y="440" width="1" height="1" fill="#ffffff"/>
<rect x="516" y="439" width="1" height="1" fill="#ffffff"/>
<rect x="336" y="449" width="175" height="3" fill="#000000"/>
<rect x="336" y="450" width="175" height="1" fill="#00a000"/>
<rect x="336" y="449" width="159" height="3" fill="#00a000"/>
<rect x="498" y="449" width="13" height="3" fill="#00a000"/>
<rect x="335" y="446" width="1" height="9" fill="#ffffff"/>
<rect x="511" y="445" width="1" height="11" fill="#ffffff"/>
<rect x="512" y="447" width="1" height="7" fill="#00a000"/>
<rect x="512" y="446" width="1" height="1" fill="#ffffff"/>
<rect x="512" y="454" width="1" height="1" fill="#ffffff"/>
<rect x="513" y="448" width="1" height="5" fill="#00a000"/>
<rect x="513" y="447" width="1" height="1" fill="#ffffff"/>
<rect x="513" y="453" width="1" height="1" fill="#ffffff"/>
<rect x="514" y="449" width="1" height="3" fill="#00a000"/>
<rect x="514" y="448" width="1" height="1" fill="#ffffff"/>
<rect x="514" y="452" width="1" height="1" fill="#ffffff"/>
<rect x="515" y="450" width="1" height="1" fill="#00a000"/>
<rect x="515" y="449" width="1" height="1" fill="#ffffff"/>
<rect x="515" y="451" width="1" height="1" fill="#ffffff"/>
<rect x="516" y="450" width="1" height="1" fill="#ffffff"/>
<rect x="500" y="452" width="1" height="2" fill="#ffff80"/>
<rect x="499" y="454" width="3" height="2" fill="#ffff80"/>
<rect x="10" y="460" width="516" height="3" fill="#000032"/>
<rect x="336" y="460" width="175" height="3" fill="#000000"/>
<rect x="336" y="461" width="175" height="1" fill="#00a000"/>
<rect x="336" y="460" width="159" height="3" fill="#00a000"/>
<rect x="498" y="460" width="13" height="3" fill="#00a000"/>
<rect x="335" y="457" width="1" height="9" fill="#ffffff"/>
<rect x="511" y="456" width="1" height="11" fill="#ffffff"/>
<rect x="512" y="458" width="1" height="7" fill="#00a000"/>
<rect x="512" y="457" width="1" height="1" fill="#ffffff"/>
<rect x="512" y="465" width="1" height="1" fill="#ffffff"/>
<rect x="513" y="459" width="1" height="5" fill="#00a000"/>
<rect x="513" y="458" width="1" height="1" fill="#ffffff"/>
<rect x="513" y="464" width="1" height="1" fill="#ffffff"/>
<rect x="514" y="460" width="1" height="3" fill="#00a000"/>
<rect x="514" y="459" width="1" height="1" fill="#ffffff"/>
<rect x="514" y="463" width="1" height="1" fill="#ffffff"/>
<rect x="515" y="461" width="1" height="1" fill="#00a000"/>
<rect x="515" y="460" width="1" height="1" fill="#ffffff"/>
<rect x="515" y="462" width="1" height="1" fill="#ffffff"/>
<rect x="516" y="461" width="1" height="1" fill="#ffffff"/>
<rect x="500" y="463" width="1" height="2" fill="#ffff80"/>
<rect x="499" y="465" width="3" height="2" fill="#ffff80"/>
<rect x="336" y="471" width="172" height="3" fill="#000000"/>
<rect x="336" y="472" width="172" height="1" fill="#00a000"/>
<rect x="336" y="471" width="157" height="3" fill="#00a000"/>
<rect x="495" y="471" width="8" height="3" fill="#00a000"/>
<rect x="505" y="471" width="3" height="3" fill="#00a000"/>
<rect x="335" y="468" width="1" height="9" fill="#ffffff"/>
<rect x="508" y="467" width="1" height="11" fill="#ffffff"/>
<rect x="509" y="469" width="1" height="7" fill="#00a000"/>
<rect x="509" y="468" width="1" height="1" fill="#ffffff"/>
<rect x="509" y="476" width="1" height="1" fill="#ffffff"/>
<rect x="510" y="470" width="1" height="5" fill="#00a000"/>
<rect x="510" y="469" width="1" height="1" fill="#ffffff"/>
<rect x="510" y="475" width="1" height="1" fill="#ffffff"/>
<rect x="511" y="471" width="1" height="3" fill="#00a000"/>
<rect x="511" y="470" width="1" height="1" fill="#ffffff"/>
<rect x="511" y="474" width="1" height="1" fill="#ffffff"/>
<rect x="512" y="472" width="1" height="1" fill="#00a000"/>
<rect x="512" y="471" width="1" height="1" fill="#ffffff"/>
<rect x="512" y="473" width="1" height="1" fill="#ffffff"/>
<rect x="513" y="472" width="1" height="1" fill="#ffffff"/>
<rect x="10" y="482" width="516" height="3" fill="#000032"/>
<rect x="336" y="482" width="172" height="3" fill="#000000"/>
<rect x="336" y="483" width="172" height="1" fill="#00a000"/>
<rect x="336" y="482" width="157" height="3" fill="#00a000"/>
<rect x="495" y="482" width="8" height="3" fill="#00a000"/>
<rect x="505" y="482" width="3" height="3" fill="#00a000"/>
<rect x="335" y="479" width="1" height="9" fill="#ffffff"/>
<rect x="508" y="478" width="1" height="11" fill="#ffffff"/>
<rect x="509" y="480" width="1" height="7" fill="#00a000"/>
<rect x="509" y="479" width="1" height="1" fill="#ffffff"/>
<rect x="509" y="487" width="1" height="1" fill="#ffffff"/>
<rect x="510" y="481" width="1" height="5" fill="#00a000"/>
<rect x="510" y="480" width="1" height="1" fill="#ffffff"/>
<rect x="510" y="486" width="1" height="1" fill="#ffffff"/>
<rect x="511" y="482" width="1" height="3" fill="#00a000"/>
<rect x="511" y="481" width="1" height="1" fill="#ffffff"/>
<rect x="511" y="485" width="1" height="1" fill="#ffffff"/>
<rect x="512" y="483" width="1" height="1" fill="#00a000"/>
<rect x="512" y="482" width="1" height="1" fill="#ffffff"/>
<rect x="512" y="484" width="1" height="1" fill="#ffffff"/>
<rect x="513" y="483" width="1" height="1" fill="#ffffff"/>
<rect x="336" y="493" width="172" height="3" fill="#000000"/>
<rect x="336" y="494" width="172" height="1" fill="#00a000"/>
<rect x="336" y="493" width="157" height="3" fill="#00a000"/>
<rect x="495" y="493" width="8" height="3" fill="#00a000"/>
<rect x="505" y="493" width="3" height="3" fill="#00a000"/>
<rect x="335" y="490" width="1" height="9" fill="#ffffff"/>
<rect x="508" y="489" width="1" height="11" fill="#ffffff"/>
<rect x="509" y="491" width="1" height="7" fill="#00a000"/>
<rect x="509" y="490" width="1" height="1" fill="#ffffff"/>
<rect x="509" y="498" width="1" height="1" fill="#ffffff"/>
<rect x="510" y="492" width="1" height="5" fill="#00a000"/>
<rect x="510" y="491" width="1" height="1" fill="#ffffff"/>
<rect x="510" y="497" width="1" height="1" fill="#ffffff"/>
<rect x="511" y="493" width="1" height="3" fill="#00a000"/>
<rect x="511" y="492" width="1" height="1" fill="#ffffff"/>
<rect x="511" y="496" width="1" height="1" fill="#ffffff"/>
<rect x="512" y="494" width="1" height="1" fill="#00a000"/>
<rect x="512" y="493" width="1" height="1" fill="#ffffff"/>
<rect x="512" y="495" width="1" height="1" fill="#ffffff"/>
<rect x="513" y="494" width="1" height="1" fill="#ffffff"/>
<rect x="10" y="504" width="516" height="3" fill="#000032"/>
<rect x="336" y="504" width="172" height="3" fill="#000000"/>
<rect x="336" y="505" width="172" height="1" fill="#a520a5"/>
<rect x="336" y="504" width="157" height="3" fill="#a520a5"/>
<rect x="496" y="504" width="12" height="3" fill="#a520a5"/>
<rect x="335" y="501" width="1" height="9" fill="#ffffff"/>
<rect x="508" y="500" width="1" height="11" fill="#ffffff"/>
<rect x="509" y="502" width="1" height="7" fill="#a520a5"/>
<rect x="509" y="501" width="1" height="1" fill="#ffffff"/>
<rect x="509" y="509" width="1" height="1" fill="#ffffff"/>
<rect x="510" y="503" width="1" height="5" fill="#a520a5"/>
<rect x="510" y="502" width="1" height="1" fill="#ffffff"/>
<rect x="510" y="508" width="1" height="1" fill="#ffffff"/>
<rect x="511" y="504" width="1" height="3" fill="#a520a5"/>
<rect x="511" y="503" width="1" height="1" fill="#ffffff"/>
<rect x="511" y="507" width="1" height="1" fill="#ffffff"/>
<rect x="512" y="505" width="1" height="1" fill="#a520a5"/>
<rect x="512" y="504" width="1" height="1" fill="#ffffff"/>
<rect x="512" y="506" width="1" height="1" fill="#ffffff"/>
<rect x="513" y="505" width="1" height="1" fill="#ffffff"/>
<rect x="336" y="515" width="172" height="3" fill="#000000"/>
<rect x="336" y="516" width="172" height="1" fill="#a520a5"/>
<rect x="336" y="515" width="157" height="3" fill="#a520a5"/>
<rect x="496" y="515" width="12" height="3" fill="#a520a5"/>
<rect x="335" y="512" width="1" height="9" fill="#ffffff"/>
<rect x="508" y="511" width="1" height="11" fill="#ffffff"/>
<rect x="509" y="513" width="1" height="7" fill="#a520a5"/>
<rect x="509" y="512" width="1" height="1" fill="#ffffff"/>
<rect x="509" y="520" width="1" height="1" fill="#ffffff"/>
<rect x="510" y="514" width="1" height="5" fill="#a520a5"/>
<rect x="510" y="513" width="1" height="1" fill="#ffffff"/>
<rect x="510" y="519" width="1" height="1" fill="#ffffff"/>
<rect x="511" y="515" width="1" height="3" fill="#a520a5"/>
<rect x="511" y="514" width="1" height="1" fill="#ffffff"/>
<rect x="511" y="518" width="1" height="1" fill="#ffffff"/>
<rect x="512" y="516" width="1" height="1" fill="#a520a5"/>
<rect x="512" y="515" width="1" height="1" fill="#ffffff"/>
<rect x="512" y="517" width="1" height="1" fill="#ffffff"/>
<rect x="513" y="516" width="1" height="1" fill="#ffffff"/>
<rect x="82" y="531" width="1" height="2" fill="#ffff80"/>
<rect x="81" y="533" width="3" height="3" fill="#ffff80"/>
<rect x="80" y="536" width="5" height="2" fill="#ffff80"/>
<rect x="155" y="534" width="6" height="1" fill="#00c8c8"/>
<rect x="438" y="530" width="1" height="9" fill="#323200"/>
<rect x="456" y="530" width="1" height="9" fill="#323200"/>
<rect x="439" y="533" width="17" height="3" fill="#00c8c8"/>
</svg>
<div id="tx">
<div class="t b" style="left:113px;top:2px">20%</div>
<div class="t b" style="left:230px;top:2px"><span class="w">~</span>40%</div>
<div class="t b" style="left:354px;top:2px"><span class="w">~</span>60%</div>
<div class="t b" style="left:478px;top:2px"><span class="w">~</span>80%</div>
<div class="t b" style="left:595px;top:2px"><span class="w">~</span>100%</div>
<div class="t b" style="left:10px;top:27px">BP045647</div>
<div class="t s" style="left:13px;top:44px">1</div>
<div class="t s" style="left:496px;top:44px">568</div>
<div class="t s p" style="left:8px;top:44px;transform:translateX(-0.25px)">|</div>
<div class="t s p" style="left:515px;top:44px;transform:translateX(-0.25px)">|</div>
<div class="t n" style="left:402px;top:31px">AlignView.pm Beta rel.7</div>
<div class="t s" style="left:526px;top:59px">UniRef100<span class="u">_</span>B9SAF1</div>
<div class="t s" style="left:526px;top:70px">UniRef100<span class="u">_</span>A7P0T1</div>
<div class="t s" style="left:526px;top:81px">UniRef100<span class="u">_</span>Q5ZBU1</div>
<div class="t s" style="left:526px;top:92px">UniRef100<span class="u">_</span>Q8S1L2</div>
<div class="t s" style="left:526px;top:103px">UniRef100<span class="u">_</span>B8AAX6</div>
<div class="t s" style="left:526px;top:114px">UniRef100<span class="u">_</span>B9I0D5</div>
<div class="t s" style="left:526px;top:125px">UniRef100<span class="u">_</span>Q9SZ41</div>
<div class="t s" style="left:526px;top:136px">UniRef100<span class="u">_</span>B9I7T6</div>
<div class="t s" style="left:526px;top:147px">UniRef100<span class="u">_</span>Q9FFU3</div>
<div class="t s" style="left:526px;top:158px">UniRef100<span class="u">_</span>C4J3F4</div>
<div class="t s" style="left:526px;top:169px">UniRef100<span class="u">_</span>C0P8H3</div>
<div class="t s" style="left:526px;top:180px">UniRef100<span class="u">_</span>B6SW19</div>
<div class="t s" style="left:526px;top:191px">UniRef100<span class="u">_</span>B4G0B4</div>
<div class="t s" style="left:526px;top:202px">UniRef100<span class="u">_</span>A7P0T4</div>
<div class="t s" style="left:526px;top:213px">UniRef100<span class="u">_</span>A5AXY6</div>
<div class="t s" style="left:526px;top:224px">UniRef100<span class="u">_</span>B8LP81</div>
<div class="t s" style="left:526px;top:235px">UniRef100<span class="u">_</span>A9NVI8</div>
<div class="t s" style="left:526px;top:246px">UniRef100<span class="u">_</span>C5XC28</div>
<div class="t s" style="left:526px;top:257px">UniRef100<span class="u">_</span>A7Q2K1</div>
<div class="t s" style="left:526px;top:268px">UniRef100<span class="u">_</span>B6TSK0</div>
<div class="t s" style="left:526px;top:279px">UniRef100<span class="u">_</span>B4G1X6</div>
<div class="t s" style="left:526px;top:290px">UniRef100<span class="u">_</span>B4FI44</div>
<div class="t s" style="left:526px;top:301px">UniRef100<span class="u">_</span>Q9C5K0</div>
<div class="t s" style="left:526px;top:312px">UniRef100<span class="u">_</span>Q56WL6</div>
<div class="t s" style="left:526px;top:323px">UniRef100<span class="u">_</span>O04530</div>
<div class="t s" style="left:526px;top:334px">UniRef100<span class="u">_</span>Q6H416</div>
<div class="t s" style="left:526px;top:345px">UniRef100<span class="u">_</span>A2Z0X5</div>
<div class="t s" style="left:526px;top:356px">UniRef100<span class="u">_</span>B9HMT0</div>
<div class="t s" style="left:526px;top:367px">UniRef100<span class="u">_</span>A9TSP9</div>
<div class="t s" style="left:526px;top:378px">UniRef100<span class="u">_</span>Q7EZU2</div>
<div class="t s" style="left:526px;top:389px">UniRef100<span class="u">_</span>B8BAZ5</div>
<div class="t s" style="left:526px;top:400px">UniRef100<span class="u">_</span>A9TA22</div>
<div class="t s" style="left:526px;top:411px">UniRef100<span class="u">_</span>A3BT99</div>
<div class="t s" style="left:526px;top:422px">UniRef100<span class="u">_</span>B9S2I9</div>
<div class="t s" style="left:526px;top:433px">UniRef100<span class="u">_</span>C5YL08</div>
<div class="t s" style="left:526px;top:444px">UniRef100<span class="u">_</span>C0PM45</div>
<div class="t s" style="left:526px;top:455px">UniRef100<span class="u">_</span>B6SZ90</div>
<div class="t s" style="left:526px;top:466px">UniRef100<span class="u">_</span>A0CDJ5</div>
<div class="t s" style="left:526px;top:477px">UniRef100<span class="u">_</span>A0DFG2</div>
<div class="t s" style="left:526px;top:488px">UniRef100<span class="u">_</span>A0DXJ8</div>
<div class="t s" style="left:526px;top:499px">UniRef100<span class="u">_</span>Q22H18</div>
<div class="t s" style="left:526px;top:510px">UniRef100<span class="u">_</span>UPI000..</div>
<div class="t s" style="left:9px;top:529px">Large gaps:</div>
<div class="t s" style="left:88px;top:529px">(in Query)/</div>
<div class="t s" style="left:166px;top:529px">(in Subject)</div>
<div class="t s" style="left:459px;top:529px">=100char.</div>
</div>
</body></html>
